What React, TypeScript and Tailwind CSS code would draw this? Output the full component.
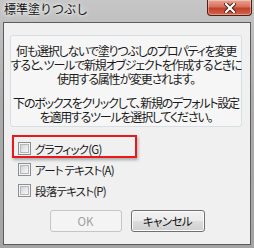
const jp = "font-['Noto_Sans_CJK_JP','Noto_Sans',sans-serif]";

const options = [
  { label: "グラフィック(G)", marked: true },
  { label: "アート テキスト(A)", marked: false },
  { label: "段落テキスト(P)", marked: false },
];

function CheckBox() {
  return (
    <span className="flex h-[13px] w-[13px] shrink-0 items-center justify-center border border-[#8e8f8f] bg-[#f4f4f4]">
      <span className="h-[9px] w-[9px] border border-[#b4b8bd] bg-[linear-gradient(135deg,#cfd2d6_0%,#e9eaec_60%,#f6f6f6_100%)]" />
    </span>
  );
}

function CloseButton() {
  return (
    <div className="flex h-[16px] w-[45px] items-center justify-center rounded-b-[4px] border border-t-0 border-[#4e2018] bg-[linear-gradient(180deg,#e9a494_0%,#d8705a_45%,#c2402a_55%,#d2664c_100%)] shadow-[inset_0_0_0_1px_rgba(255,255,255,0.35)]">
      <svg width="12" height="10" viewBox="0 0 12 10">
        <path d="M2 1 L10 9 M10 1 L2 9" stroke="#3a1a14" strokeWidth="4" strokeLinecap="square" />
        <path d="M2 1 L10 9 M10 1 L2 9" stroke="#ffffff" strokeWidth="2.2" strokeLinecap="square" />
      </svg>
    </div>
  );
}

export default function App() {
  return (
    <div className={`flex h-[248px] w-[254px] flex-col overflow-hidden bg-[linear-gradient(180deg,#c6c6c6_0%,#acacac_40%,#a4a4a4_100%)] ${jp}`}>
      <div className="flex h-[22px] shrink-0 items-start justify-between pl-[4px] pr-[2px]">
        <p className="pt-[1px] text-[12px] leading-[16px] text-[#111] [text-shadow:0_0_6px_#fff,0_0_3px_#fff]">
          標準塗りつぶし
        </p>
        <CloseButton />
      </div>

      <div className="mx-[3px] flex h-[223px] shrink-0 flex-col overflow-hidden border border-[#5c5c5c] bg-[#f0f0f0] text-[#1a1a1a]">
        <div className="ml-[6px] mt-[12px] flex h-[92px] w-[232px] shrink-0 flex-col items-center rounded-[3px] border border-[#d5dfe5] bg-[#f6f6f6] pt-[8px] text-[12px] leading-[14px] tracking-[-1.2px] whitespace-nowrap [font-feature-settings:'palt']">
          <p className="text-center">
            何も選択しないで塗りつぶしのプロパティを変更
            <br />
            すると、ツールで新規オブジェクトを作成するときに
            <br />
            使用する属性が変更されます。
          </p>
          <p className="mt-[10px] text-center">
            下のボックスをクリックして、新規のデフォルト設定
            <br />
            を適用するツールを選択してください。
          </p>
        </div>

        <div className="mt-[11px] flex flex-col">
          {options.map((o) => (
            <div key={o.label} className="relative flex h-[21px] items-center gap-[4px] pl-[14px] text-[11.5px] leading-[14px] tracking-[-0.8px] [font-feature-settings:'palt']">
              <CheckBox />
              <span>{o.label}</span>
              {o.marked ? (
                <span className="pointer-events-none absolute left-[8px] top-[-3px] h-[23px] w-[125px] border-2 border-[#e8191a] shadow-[1px_2px_3px_rgba(0,0,0,0.3)]" />
              ) : null}
            </div>
          ))}
        </div>

        <div className="mt-[9px] flex justify-center gap-[9px] text-[11.5px] leading-[14px] [font-feature-settings:'palt']">
          <button className="h-[22px] w-[72px] rounded-[3px] border border-[#c5c5c5] bg-[#f4f4f4] text-[#a0a0a0]">
            OK
          </button>
          <button className="h-[22px] w-[74px] rounded-[3px] border border-[#707070] bg-[linear-gradient(180deg,#f2f2f2_0%,#ebebeb_48%,#dddddd_52%,#cfcfcf_100%)] tracking-[-0.6px] text-[#111] shadow-[inset_0_0_0_1px_#fbfbfb]">
            キャンセル
          </button>
        </div>
      </div>
    </div>
  );
}
